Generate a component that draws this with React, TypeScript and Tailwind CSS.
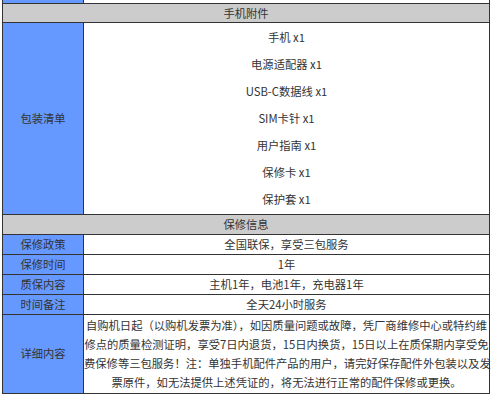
export default function App() {
  return (
    <div className="w-[492px] h-[396px] bg-white overflow-hidden font-['Noto_Sans_CJK_SC','Noto_Sans',sans-serif] text-[11.3px] text-[#333]">
      <table className="ml-[2px] w-[488px] table-fixed border-collapse -mt-px">
        <colgroup>
          <col className="w-[81px]" />
          <col />
        </colgroup>
        <tbody>
          {/* cut-off row from above */}
          <tr className="h-[4px]">
            <td className="border border-t-0 border-[#333] bg-[#6699ff] p-0"></td>
            <td className="border border-t-0 border-[#333] p-0"></td>
          </tr>

          <tr className="h-[19px]">
            <td colSpan={2} className="border border-[#333] bg-[#cccccc] p-0 text-center leading-[18px]">
              手机附件
            </td>
          </tr>

          <tr>
            <td className="border border-[#333] bg-[#6699ff] p-0 text-center">包装清单</td>
            <td className="border border-[#333] p-0 text-center">
              <div className="flex flex-col h-[191px] justify-center">
                {packing.map((item) => (
                  <div key={item} className="h-[27px] leading-[27px]">
                    {item}
                  </div>
                ))}
              </div>
            </td>
          </tr>

          <tr className="h-[20px]">
            <td colSpan={2} className="border border-[#333] bg-[#cccccc] p-0 text-center leading-[19px]">
              保修信息
            </td>
          </tr>

          {warranty.map((row) => (
            <tr key={row.label} className="h-[20px]">
              <td className="border border-[#333] bg-[#6699ff] p-0 text-center leading-[19px]">{row.label}</td>
              <td className="border border-[#333] p-0 text-center leading-[19px]">{row.value}</td>
            </tr>
          ))}

          <tr>
            <td className="border border-[#333] bg-[#6699ff] p-0 text-center">详细内容</td>
            <td className="border border-[#333] p-0 text-center leading-[19px]">
              <div className="py-px">
                {details.map((line) => (
                  <div key={line} className="whitespace-nowrap">
                    {line}
                  </div>
                ))}
              </div>
            </td>
          </tr>
        </tbody>
      </table>
    </div>
  );
}

const packing = [
  "手机 x1",
  "电源适配器 x1",
  "USB-C数据线 x1",
  "SIM卡针 x1",
  "用户指南 x1",
  "保修卡 x1",
  "保护套 x1",
];

const warranty = [
  { label: "保修政策", value: "全国联保，享受三包服务" },
  { label: "保修时间", value: "1年" },
  { label: "质保内容", value: "主机1年，电池1年，充电器1年" },
  { label: "时间备注", value: "全天24小时服务" },
];

const details = [
  "自购机日起（以购机发票为准），如因质量问题或故障，凭厂商维修中心或特约维",
  "修点的质量检测证明，享受7日内退货，15日内换货，15日以上在质保期内享受免",
  "费保修等三包服务！注：单独手机配件产品的用户，请完好保存配件外包装以及发",
  "票原件，如无法提供上述凭证的，将无法进行正常的配件保修或更换。",
];
